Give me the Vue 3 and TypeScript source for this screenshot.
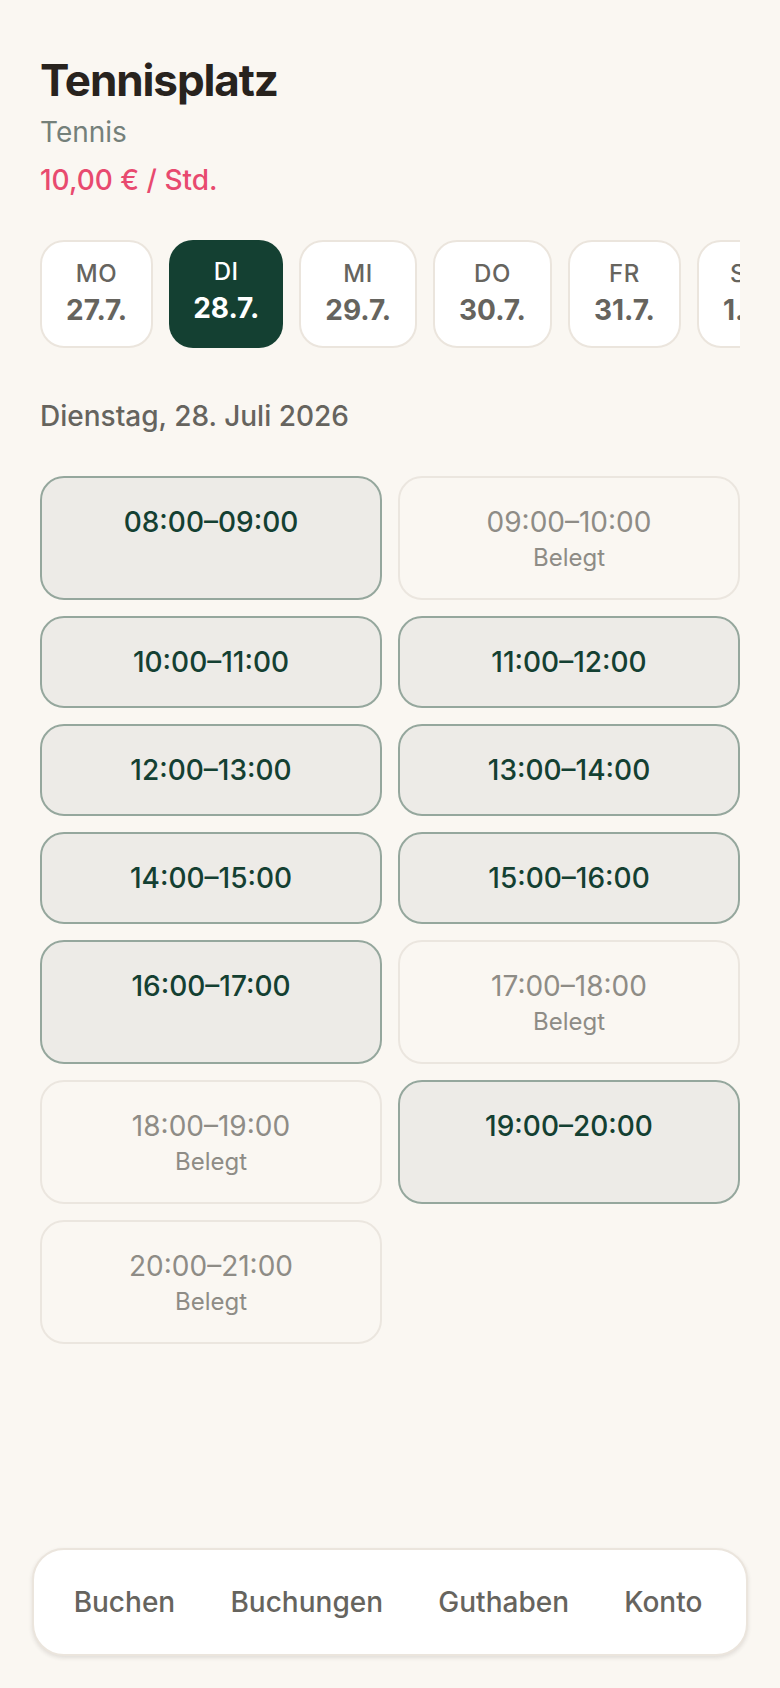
<script setup lang="ts">
import { ref } from 'vue'

interface Day {
  name: string
  date: string
}

interface Slot {
  time: string
  booked: boolean
}

const days: Day[] = [
  { name: 'Mo', date: '27.7.' },
  { name: 'Di', date: '28.7.' },
  { name: 'Mi', date: '29.7.' },
  { name: 'Do', date: '30.7.' },
  { name: 'Fr', date: '31.7.' },
  { name: 'Sa', date: '1.8.' },
  { name: 'So', date: '2.8.' },
]

const selectedDate = ref('28.7.')

const bookedHours = [9, 17, 18, 20]

const pad = (hour: number): string => String(hour).padStart(2, '0')

const slots: Slot[] = Array.from({ length: 13 }, (_, i) => {
  const hour = i + 8
  return { time: `${pad(hour)}:00–${pad(hour + 1)}:00`, booked: bookedHours.includes(hour) }
})

const links = ['Buchen', 'Buchungen', 'Guthaben', 'Konto']
</script>

<template>
  <div class="page">
    <main class="content">
      <header class="header">
        <h1 class="title">Tennisplatz</h1>
        <p class="sport">Tennis</p>
        <p class="price">10,00 € / Std.</p>
      </header>

      <div class="days">
        <button
          v-for="day in days"
          :key="day.date"
          type="button"
          class="day"
          :class="{ selected: day.date === selectedDate }"
          :aria-pressed="day.date === selectedDate"
          @click="selectedDate = day.date"
        >
          <span class="day-name">{{ day.name }}</span>
          <span class="day-date">{{ day.date }}</span>
        </button>
      </div>

      <h2 class="heading">Dienstag, 28. Juli 2026</h2>

      <div class="slots">
        <button
          v-for="slot in slots"
          :key="slot.time"
          type="button"
          class="slot"
          :class="{ booked: slot.booked }"
          :disabled="slot.booked"
        >
          <span class="slot-time">{{ slot.time }}</span>
          <span v-if="slot.booked" class="slot-note">Belegt</span>
        </button>
      </div>
    </main>

    <nav class="nav">
      <a v-for="link in links" :key="link" class="nav-link" :href="`#${link.toLowerCase()}`">{{ link }}</a>
    </nav>
  </div>
</template>

<style>
body {
  background: #faf7f2;
}
</style>

<style scoped>
.page {
  box-sizing: border-box;
  display: flex;
  flex-direction: column;
  min-height: 100vh;
  background: #faf7f2;
  color: #66645e;
  font-family: Inter, "Liberation Sans", sans-serif;
  font-size: 28px;
  line-height: 40px;
}

.content {
  flex: 1;
  padding: 48px 40px;
}

.title,
.sport,
.price,
.heading {
  margin: 0;
}

.title {
  color: #28231e;
  font-size: 44px;
  font-weight: 700;
  line-height: 64px;
  letter-spacing: -0.025em;
}

.sport {
  color: #74807a;
}

.price {
  margin-top: 8px;
  color: #e84a6f;
  font-weight: 500;
}

.days {
  display: flex;
  gap: 16px;
  margin-top: 40px;
  overflow-x: auto;
  scrollbar-width: none;
}

.day {
  display: flex;
  flex: none;
  flex-direction: column;
  align-items: center;
  padding: 16px 24px;
  border: 2px solid #ebe5dd;
  border-radius: 24px;
  background: #fff;
  color: #66645e;
  font: inherit;
}

.day.selected {
  border: 0;
  background: #144032;
  color: #fff;
}

.day-name {
  font-size: 24px;
  font-weight: 500;
  line-height: 32px;
  text-transform: uppercase;
  letter-spacing: 0.025em;
}

.day-date {
  font-weight: 650;
}

.heading {
  margin-top: 48px;
  font-size: 28px;
  font-weight: 500;
}

.slots {
  display: grid;
  grid-template-columns: 1fr 1fr;
  gap: 16px;
  margin-top: 40px;
}

.slot {
  display: flex;
  flex-direction: column;
  align-items: center;
  padding: 24px;
  border: 2px solid #95a79d;
  border-radius: 24px;
  background: #edebe7;
  color: #144032;
  font: inherit;
  font-weight: 550;
}

.slot.booked {
  border-color: #ebe6df;
  background: transparent;
  color: #8e8c86;
  font-weight: 400;
}

.slot-note {
  font-size: 24px;
  line-height: 32px;
}

.nav {
  display: flex;
  justify-content: space-around;
  margin: 0 32px 32px;
  padding: 16px 16px 16px 12px;
  border: 2px solid #ebe5dd;
  border-radius: 32px;
  background: #fff;
  box-shadow: 0 2px 4px rgba(40, 35, 30, 0.12);
}

.nav-link {
  padding: 16px 0;
  color: #66645e;
  font-weight: 500;
  text-decoration: none;
}
</style>
